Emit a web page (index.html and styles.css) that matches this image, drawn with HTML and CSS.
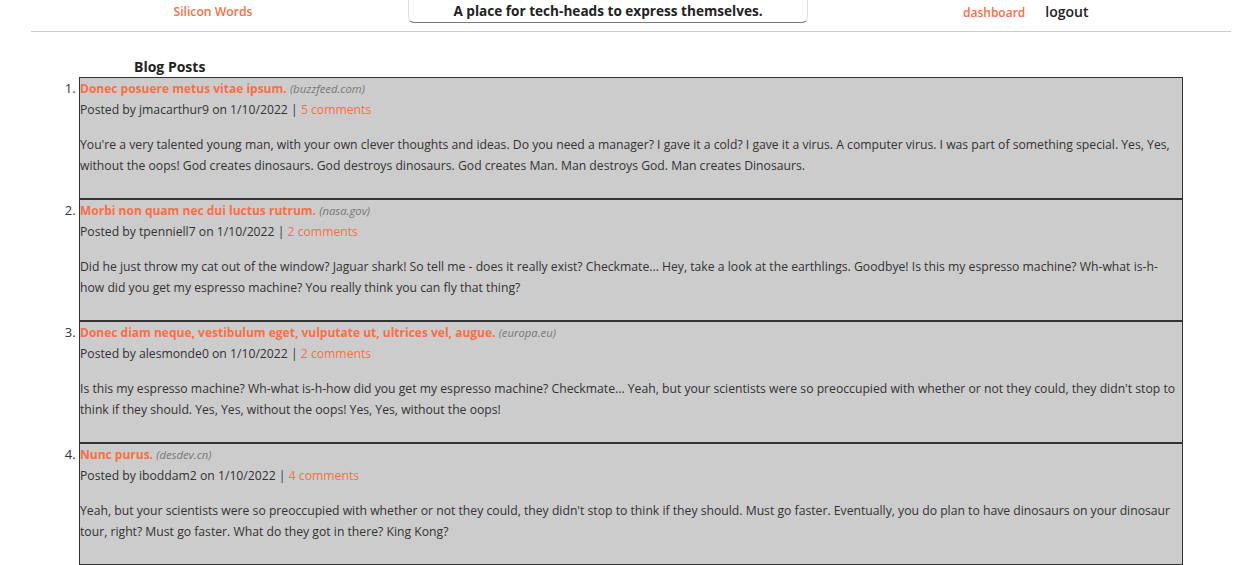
FILE: index.html
```html
<!DOCTYPE html>
<html lang="en">
<head>
<meta charset="utf-8">
<title>Silicon Words</title>
<link rel="stylesheet" href="styles.css">
</head>
<body>
<header class="site-header">
  <a class="brand" href="#">Silicon Words</a>
  <div class="tagline">A place for tech-heads to express themselves.</div>
  <nav class="nav">
    <a class="nav-link" href="#">dashboard</a>
    <a class="nav-logout" href="#">logout</a>
  </nav>
</header>
<main class="content">
  <h2 class="section-title">Blog Posts</h2>
  <ol class="posts">
    <li class="post">
      <div class="post-title"><a href="#">Donec posuere metus vitae ipsum.</a> <span class="domain">(buzzfeed.com)</span></div>
      <div class="post-meta">Posted by jmacarthur9 on 1/10/2022 <span class="sep">|</span> <a href="#">5 comments</a></div>
      <p class="post-body">You're a very talented young man, with your own clever thoughts and ideas. Do you need a manager? I gave it a cold? I gave it a virus. A computer virus. I was part of something special. Yes, Yes, without the oops! God creates dinosaurs. God destroys dinosaurs. God creates Man. Man destroys God. Man creates Dinosaurs.</p>
    </li>
    <li class="post">
      <div class="post-title"><a href="#">Morbi non quam nec dui luctus rutrum.</a> <span class="domain">(nasa.gov)</span></div>
      <div class="post-meta">Posted by tpenniell7 on 1/10/2022 <span class="sep">|</span> <a href="#">2 comments</a></div>
      <p class="post-body">Did he just throw my cat out of the window? Jaguar shark! So tell me - does it really exist? Checkmate... Hey, take a look at the earthlings. Goodbye! Is this my espresso machine? Wh-what is-h-how did you get my espresso machine? You really think you can fly that thing?</p>
    </li>
    <li class="post">
      <div class="post-title"><a href="#">Donec diam neque, vestibulum eget, vulputate ut, ultrices vel, augue.</a> <span class="domain">(europa.eu)</span></div>
      <div class="post-meta">Posted by alesmonde0 on 1/10/2022 <span class="sep">|</span> <a href="#">2 comments</a></div>
      <p class="post-body">Is this my espresso machine? Wh-what is-h-how did you get my espresso machine? Checkmate... Yeah, but your scientists were so preoccupied with whether or not they could, they didn't stop to think if they should. Yes, Yes, without the oops! Yes, Yes, without the oops!</p>
    </li>
    <li class="post">
      <div class="post-title"><a href="#">Nunc purus.</a> <span class="domain">(desdev.cn)</span></div>
      <div class="post-meta">Posted by iboddam2 on 1/10/2022 <span class="sep">|</span> <a href="#">4 comments</a></div>
      <p class="post-body">Yeah, but your scientists were so preoccupied with whether or not they could, they didn't stop to think if they should. Must go faster. Eventually, you do plan to have dinosaurs on your dinosaur tour, right? Must go faster. What do they got in there? King Kong?</p>
    </li>
  </ol>
</main>
</body>
</html>
```
FILE: styles.css
```css
* { box-sizing: border-box; }
html, body { margin: 0; padding: 0; background: #fff; }
body {
  font-family: "Open Sans", "Noto Sans", sans-serif;
  font-size: 12.2px;
  color: #333;
}
a { text-decoration: none; color: #fa6f44; }

.site-header {
  display: grid;
  grid-template-columns: 364px 400px 1fr;
  column-gap: 13px;
  align-items: start;
  width: 1200px;
  margin-left: 31px;
  height: 32px;
  border-bottom: 1px solid #ccc;
}
.brand {
  text-align: center;
  font-weight: 600;
  font-size: 12.2px;
  line-height: 24px;
}
.tagline {
  text-align: center;
  font-weight: 700;
  font-size: 13.6px;
  line-height: 22px;
  height: 23px;
  color: #222;
  border-bottom: 1px solid #777;
  border-left: 1px solid #ddd;
  border-right: 1px solid #ddd;
  border-radius: 0 0 6px 6px;
}
.nav {
  display: flex;
  gap: 20px;
  padding-left: 142px;
  align-items: baseline;
}
.nav-link { font-weight: 600; font-size: 12px; line-height: 24px; }
.nav-logout { color: #222; font-weight: 600; font-size: 14px; line-height: 24px; }

.content { padding-top: 25px; }
.section-title {
  margin: 0 0 0 134px;
  font-size: 14px;
  font-weight: 700;
  line-height: 20px;
  color: #222;
}
.posts {
  margin: 0;
  padding: 0;
  margin-left: 79px;
  width: 1104px;
  list-style: decimal outside;
  font-size: 12.2px;
}
.post {
  background: #ccc;
  border: 1px solid #333;
  padding: 0 0 9px 0;
  line-height: 21px;
}
.post::marker { color: #333; font-size: 13px; }
.post-title a { font-weight: 700; font-size: 12px; }
.domain { font-style: italic; color: #777; font-size: 11.3px; }
.sep { color: #2c3e50; }
.post-body { margin: 14px 0 13px 0; }
```
